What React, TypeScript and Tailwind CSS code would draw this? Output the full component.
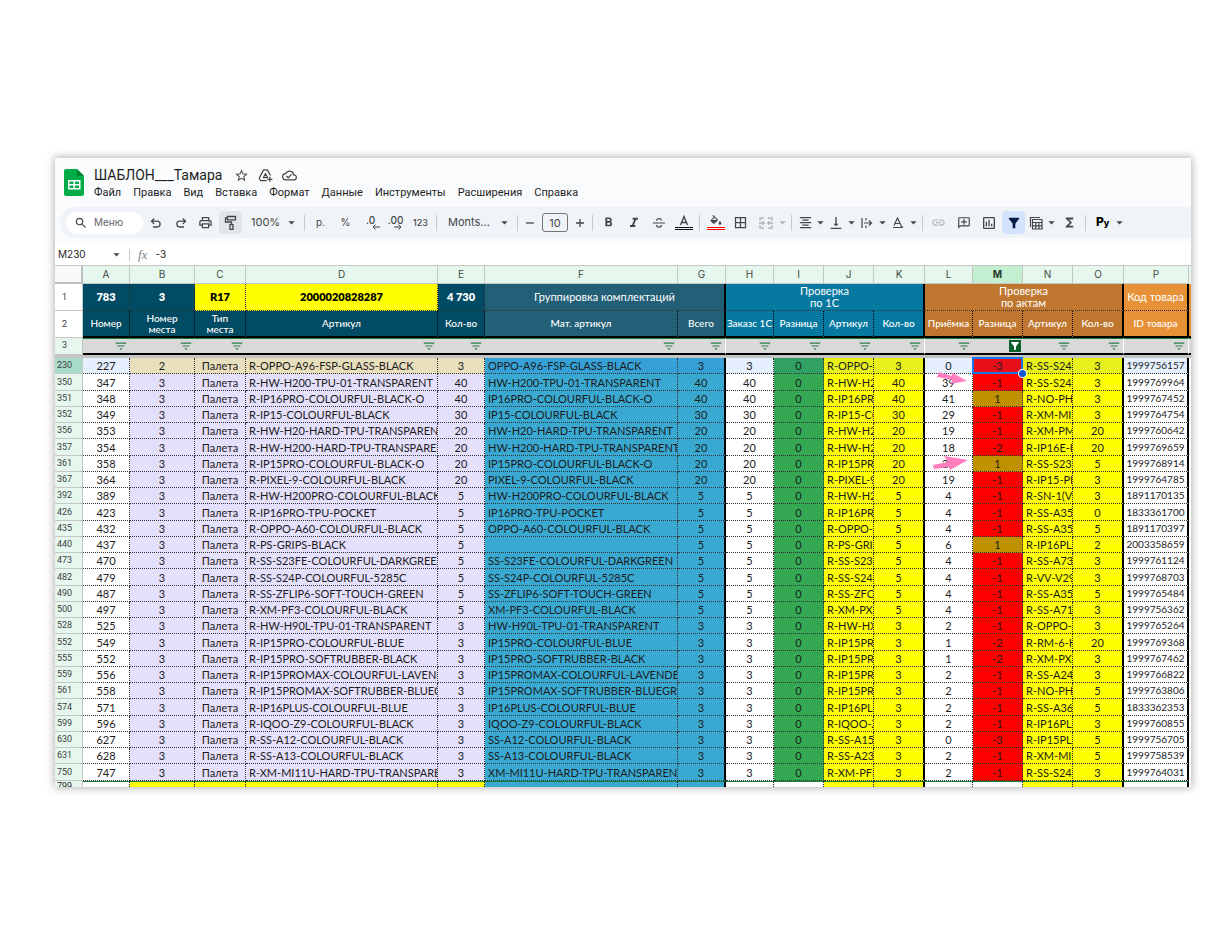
import type { ReactNode } from 'react';
import { clsx } from 'clsx';
import {
  MdArrowDropDown,
  MdBorderAll,
  MdFilterAlt,
  MdFilterList,
  MdFormatAlignCenter,
  MdFormatBold,
  MdFormatItalic,
  MdFunctions,
  MdLink,
  MdOutlineAddComment,
  MdOutlineCloudDone,
  MdOutlineInsertChart,
  MdOutlinePrint,
  MdSearch,
  MdStarBorder,
  MdVerticalAlignBottom,
} from 'react-icons/md';

const MENUS = ['Файл', 'Правка', 'Вид', 'Вставка', 'Формат', 'Данные', 'Инструменты', 'Расширения', 'Справка'];

const COLUMNS = [
  { id: 'A', width: 'w-[47px]' },
  { id: 'B', width: 'w-[65px]' },
  { id: 'C', width: 'w-[51px]' },
  { id: 'D', width: 'w-[192px]' },
  { id: 'E', width: 'w-[47px]' },
  { id: 'F', width: 'w-[193px]' },
  { id: 'G', width: 'w-[48px]' },
  { id: 'H', width: 'w-[48px]' },
  { id: 'I', width: 'w-[50px]' },
  { id: 'J', width: 'w-[50px]' },
  { id: 'K', width: 'w-[51px]' },
  { id: 'L', width: 'w-[48px]' },
  { id: 'M', width: 'w-[50px]' },
  { id: 'N', width: 'w-[50px]' },
  { id: 'O', width: 'w-[51px]' },
  { id: 'P', width: 'w-[65px]' },
];

// row, A, B, D, qty, F, J, L, M, N, O, P
type Row = [number, number, number, string, number, string, string, number, number, string, number, string];

const ROWS: Row[] = [
  [230, 227, 2, 'R-OPPO-A96-FSP-GLASS-BLACK', 3, 'OPPO-A96-FSP-GLASS-BLACK', 'R-OPPO-', 0, -3, 'R-SS-S24', 3, '1999756157'],
  [350, 347, 3, 'R-HW-H200-TPU-01-TRANSPARENT', 40, 'HW-H200-TPU-01-TRANSPARENT', 'R-HW-H2', 39, -1, 'R-SS-S24', 3, '1999769964'],
  [351, 348, 3, 'R-IP16PRO-COLOURFUL-BLACK-O', 40, 'IP16PRO-COLOURFUL-BLACK-O', 'R-IP16PR', 41, 1, 'R-NO-PH', 3, '1999767452'],
  [352, 349, 3, 'R-IP15-COLOURFUL-BLACK', 30, 'IP15-COLOURFUL-BLACK', 'R-IP15-CO', 29, -1, 'R-XM-MI9', 3, '1999764754'],
  [356, 353, 3, 'R-HW-H20-HARD-TPU-TRANSPARENT', 20, 'HW-H20-HARD-TPU-TRANSPARENT', 'R-HW-H2', 19, -1, 'R-XM-PM', 20, '1999760642'],
  [357, 354, 3, 'R-HW-H200-HARD-TPU-TRANSPARENT', 20, 'HW-H200-HARD-TPU-TRANSPARENT', 'R-HW-H2', 18, -2, 'R-IP16E-H', 20, '1999769659'],
  [361, 358, 3, 'R-IP15PRO-COLOURFUL-BLACK-O', 20, 'IP15PRO-COLOURFUL-BLACK-O', 'R-IP15PR', 21, 1, 'R-SS-S23', 5, '1999768914'],
  [367, 364, 3, 'R-PIXEL-9-COLOURFUL-BLACK', 20, 'PIXEL-9-COLOURFUL-BLACK', 'R-PIXEL-9', 19, -1, 'R-IP15-PR', 3, '1999764785'],
  [392, 389, 3, 'R-HW-H200PRO-COLOURFUL-BLACK', 5, 'HW-H200PRO-COLOURFUL-BLACK', 'R-HW-H2', 4, -1, 'R-SN-1(VI', 3, '1891170135'],
  [426, 423, 3, 'R-IP16PRO-TPU-POCKET', 5, 'IP16PRO-TPU-POCKET', 'R-IP16PR', 4, -1, 'R-SS-A35', 0, '1833361700'],
  [435, 432, 3, 'R-OPPO-A60-COLOURFUL-BLACK', 5, 'OPPO-A60-COLOURFUL-BLACK', 'R-OPPO-', 4, -1, 'R-SS-A35', 5, '1891170397'],
  [440, 437, 3, 'R-PS-GRIPS-BLACK', 5, '', 'R-PS-GRI', 6, 1, 'R-IP16PLU', 2, '2003358659'],
  [473, 470, 3, 'R-SS-S23FE-COLOURFUL-DARKGREEN', 5, 'SS-S23FE-COLOURFUL-DARKGREEN', 'R-SS-S23', 4, -1, 'R-SS-A73', 3, '1999761124'],
  [482, 479, 3, 'R-SS-S24P-COLOURFUL-5285C', 5, 'SS-S24P-COLOURFUL-5285C', 'R-SS-S24', 4, -1, 'R-VV-V29', 3, '1999768703'],
  [490, 487, 3, 'R-SS-ZFLIP6-SOFT-TOUCH-GREEN', 5, 'SS-ZFLIP6-SOFT-TOUCH-GREEN', 'R-SS-ZFO', 4, -1, 'R-SS-A35', 5, '1999765484'],
  [500, 497, 3, 'R-XM-PF3-COLOURFUL-BLACK', 5, 'XM-PF3-COLOURFUL-BLACK', 'R-XM-PX7', 4, -1, 'R-SS-A71-', 3, '1999756362'],
  [528, 525, 3, 'R-HW-H90L-TPU-01-TRANSPARENT', 3, 'HW-H90L-TPU-01-TRANSPARENT', 'R-HW-HX', 2, -1, 'R-OPPO-', 3, '1999765264'],
  [552, 549, 3, 'R-IP15PRO-COLOURFUL-BLUE', 3, 'IP15PRO-COLOURFUL-BLUE', 'R-IP15PR', 1, -2, 'R-RM-6-H', 20, '1999769368'],
  [555, 552, 3, 'R-IP15PRO-SOFTRUBBER-BLACK', 3, 'IP15PRO-SOFTRUBBER-BLACK', 'R-IP15PR', 1, -2, 'R-XM-PX3', 3, '1999767462'],
  [559, 556, 3, 'R-IP15PROMAX-COLOURFUL-LAVENDER', 3, 'IP15PROMAX-COLOURFUL-LAVENDER', 'R-IP15PR', 2, -1, 'R-SS-A24', 3, '1999766822'],
  [561, 558, 3, 'R-IP15PROMAX-SOFTRUBBER-BLUEGR', 3, 'IP15PROMAX-SOFTRUBBER-BLUEGR', 'R-IP15PR', 2, -1, 'R-NO-PH', 5, '1999763806'],
  [574, 571, 3, 'R-IP16PLUS-COLOURFUL-BLUE', 3, 'IP16PLUS-COLOURFUL-BLUE', 'R-IP16PLU', 2, -1, 'R-SS-A36', 5, '1833362353'],
  [599, 596, 3, 'R-IQOO-Z9-COLOURFUL-BLACK', 3, 'IQOO-Z9-COLOURFUL-BLACK', 'R-IQOO-Z', 2, -1, 'R-IP16PLU', 3, '1999760855'],
  [630, 627, 3, 'R-SS-A12-COLOURFUL-BLACK', 3, 'SS-A12-COLOURFUL-BLACK', 'R-SS-A15-', 0, -3, 'R-IP15PLU', 5, '1999756705'],
  [631, 628, 3, 'R-SS-A13-COLOURFUL-BLACK', 3, 'SS-A13-COLOURFUL-BLACK', 'R-SS-A23', 2, -1, 'R-XM-MI9', 5, '1999758539'],
  [750, 747, 3, 'R-XM-MI11U-HARD-TPU-TRANSPARENT', 3, 'XM-MI11U-HARD-TPU-TRANSPARENT', 'R-XM-PF3', 2, -1, 'R-SS-S24', 3, '1999764031'],
];

const DOTTED = 'border-b border-r border-dotted border-[#333333]';
const THICK = 'border-r-2 border-b border-b-[#333333] border-r-black [border-style:solid_solid_dotted_solid]';
const TEAL = 'bg-[#024b64]';
const SLATE = 'bg-[#235f76]';
const BLUE = 'bg-[#0679a1]';
const BROWN = 'bg-[#bf772f]';
const ORANGE = 'bg-[#e69138]';

function isGroupEnd(id: string) {
  return id === 'G' || id === 'K' || id === 'O' || id === 'P';
}

function Separator() {
  return <span className="mx-[3px] h-4 w-px shrink-0 bg-[#c7cacd]" />;
}

interface ToolProps {
  label: string;
  children: ReactNode;
  active?: 'gray' | 'blue';
  muted?: boolean;
}

function Tool({ label, children, active, muted }: ToolProps) {
  return (
    <button aria-label={label} className={clsx('flex h-6 w-[25px] shrink-0 items-center justify-center', muted && 'text-[#b0b3b6]')}>
      <span
        className={clsx(
          'flex h-[23px] w-[23px] items-center justify-center rounded-sm',
          active === 'gray' && 'bg-[#e1e5ea]',
          active === 'blue' && 'bg-[#d3e3fd] text-[#041e49]',
        )}
      >
        {children}
      </span>
    </button>
  );
}

function MenuTool({ label, children }: ToolProps) {
  return (
    <button aria-label={label} className="flex h-6 w-[31px] shrink-0 items-center">
      <span className="flex w-5 justify-center">{children}</span>
      <MdArrowDropDown className="-mx-0.5 h-[15px] w-[15px] shrink-0" />
    </button>
  );
}

function Picker({ label, value, className }: { label: string; value: string; className: string }) {
  return (
    <label className={clsx('relative flex h-6 shrink-0 items-center', className)}>
      <select aria-label={label} className="w-full appearance-none bg-transparent pl-2 outline-none">
        <option>{value}</option>
      </select>
      <MdArrowDropDown className="pointer-events-none absolute right-0.5 h-[15px] w-[15px]" />
    </label>
  );
}

function SheetsLogo() {
  return (
    <svg viewBox="0 0 20 27" className="mt-0.5 h-[27px] w-5 shrink-0">
      <path d="M2 0h11l7 7v18a2 2 0 0 1-2 2H2a2 2 0 0 1-2-2V2a2 2 0 0 1 2-2z" fill="#00ac47" />
      <path d="M13 0l7 7h-7z" fill="#00832d" />
      <path d="M4 11h12.500v9.500H4zM5.500 12.500v2.400h3.900v-2.400zM11 12.500v2.400h4v-2.400zM5.500 16.500v2.500h3.900v-2.500zM11 16.500v2.500h4v-2.500z" fill="#fff" fillRule="evenodd" />
    </svg>
  );
}

function DriveAddIcon() {
  return (
    <svg viewBox="0 0 24 24" className="h-[15px] w-[15px]" fill="none" stroke="currentColor" strokeWidth="2" strokeLinejoin="round">
      <path d="M14 20H4l-2-4L9 3h6l5 9" />
      <path d="M8.500 15.500L12 9l3.500 6.500z" />
      <path d="M19 14v8M15 18h8" />
    </svg>
  );
}

function TitleBar() {
  return (
    <header className="flex items-start gap-[10px] bg-[#f9fbfd] pt-[9px] pb-1 pl-[9px] font-['Roboto',sans-serif] text-[#1f1f1f]">
      <SheetsLogo />
      <div>
        <div className="flex h-4 items-center">
          <h1 className="text-[14px] leading-4 text-[#1f1f1f]">ШАБЛОН___Тамара</h1>
          <div className="ml-3 flex items-center gap-[9px] text-[#444746]">
            <button aria-label="Пометить"><MdStarBorder size={15} /></button>
            <button aria-label="Переместить"><DriveAddIcon /></button>
            <button aria-label="Статус документа"><MdOutlineCloudDone size={15} /></button>
          </div>
        </div>
        <nav className="flex h-5 items-center gap-3 text-[11px]">
          {MENUS.map((menu) => (
            <button key={menu}>{menu}</button>
          ))}
        </nav>
      </div>
    </header>
  );
}

function Toolbar() {
  return (
    <div className="bg-[#f9fbfd] pb-[6px] pl-[5px]">
      <div className="flex h-[31px] items-center rounded-l-full bg-[#f0f4f9] pl-[6px] text-[11px] text-[#444746]">
        <label className="flex h-[22px] w-[77px] shrink-0 items-center gap-1.5 rounded-full bg-white pl-2">
          <MdSearch size={14} className="shrink-0" />
          <input aria-label="Меню" placeholder="Меню" className="w-10 bg-transparent text-[10px] outline-none placeholder:text-[#5f6368]" />
        </label>
        <Tool label="Отменить">
          <svg viewBox="0 0 12 12" className="h-3 w-3" fill="none" stroke="currentColor" strokeWidth="1.300"><path d="M4.200 1.500L1.500 4.200l2.700 2.700M1.500 4.200h5.700a2.900 2.900 0 0 1 0 5.800H3" /></svg>
        </Tool>
        <Tool label="Повторить">
          <svg viewBox="0 0 12 12" className="h-3 w-3" fill="none" stroke="currentColor" strokeWidth="1.300"><path d="M7.800 1.500l2.700 2.700-2.700 2.700M10.500 4.200H4.800a2.900 2.900 0 0 0 0 5.800H9" /></svg>
        </Tool>
        <Tool label="Печать">
          <MdOutlinePrint size={15} />
        </Tool>
        <Tool label="Копировать форматирование" active="gray">
          <svg viewBox="0 0 14 16" className="h-4 w-3.5" fill="none" stroke="currentColor" strokeWidth="1.300"><path d="M3.500 1.500h8v3.400h-8zM3.500 3H1.500v4h6v2.500M6 9.700h3v4.600H6z" /></svg>
        </Tool>
        <Picker label="Масштаб" value="100%" className="w-[58px]" />
        <Separator />
        <Tool label="Денежный формат"><span className="text-[10px]">р.</span></Tool>
        <Tool label="Процентный формат"><span className="text-[10px]">%</span></Tool>
        <Tool label="Уменьшить число знаков">
          <span className="relative -top-0.5 text-[10px] font-medium">
            .0
            <svg viewBox="0 0 8 6" className="absolute top-[11px] left-1.5 h-1.5 w-2" fill="none" stroke="currentColor"><path d="M8 3H1M3.500 .5L1 3l2.500 2.500" /></svg>
          </span>
        </Tool>
        <Tool label="Увеличить число знаков">
          <span className="relative -top-0.5 text-[10px] font-medium">
            .00
            <svg viewBox="0 0 8 6" className="absolute top-[11px] left-1.5 h-1.5 w-2" fill="none" stroke="currentColor"><path d="M0 3h7M4.500 .5L7 3 4.500 5.500" /></svg>
          </span>
        </Tool>
        <Tool label="Другие форматы"><span className="text-[9px] font-medium">123</span></Tool>
        <Separator />
        <Picker label="Шрифт" value="Monts..." className="w-[74px]" />
        <Separator />
        <button aria-label="Уменьшить размер шрифта" className="flex w-[18px] shrink-0 justify-center">
          <svg viewBox="0 0 10 10" className="h-2.5 w-2.5" stroke="currentColor" strokeWidth="1.300"><path d="M1 5h8" /></svg>
        </button>
        <input aria-label="Размер шрифта" defaultValue="10" className="mx-[3px] h-[19px] w-[26px] shrink-0 rounded-[3px] border border-[#747775] bg-transparent text-center outline-none" />
        <button aria-label="Увеличить размер шрифта" className="flex w-[18px] shrink-0 justify-center">
          <svg viewBox="0 0 10 10" className="h-2.5 w-2.5" stroke="currentColor" strokeWidth="1.300"><path d="M1 5h8M5 1v8" /></svg>
        </button>
        <Separator />
        <Tool label="Полужирный">
          <MdFormatBold size={15} />
        </Tool>
        <Tool label="Курсив">
          <MdFormatItalic size={16} />
        </Tool>
        <Tool label="Зачеркнутый">
          <svg viewBox="0 0 12 12" className="h-3 w-3" fill="none" stroke="currentColor" strokeWidth="1.200"><path d="M0 6h12M8.500 3.500C8.200 2.300 7.200 1.700 6 1.700S3.500 2.300 3.500 3.700M3.500 8c.2 1.500 1.200 2.200 2.500 2.200S8.500 9.500 8.500 8" /></svg>
        </Tool>
        <Tool label="Цвет текста">
          <svg viewBox="0 0 18 16" className="h-4 w-[18px]" fill="none" stroke="currentColor" strokeWidth="1.400"><path d="M5.500 10L9 1.500 12.500 10M6.500 7.500h5" /><path d="M0 12.500h18M0 14.500h18" stroke="#111" strokeWidth="1" /></svg>
        </Tool>
        <Separator />
        <Tool label="Цвет заливки">
          <svg viewBox="0 0 18 16" className="h-4 w-[18px]">
            <path d="M6.300 0l4.900 4.900L7.500 8.600a1 1 0 0 1-1.400 0L3.800 6.300a1 1 0 0 1 0-1.400l3-3L5.400.8zM7.500 2.700L5.100 5.100h4.800zM13 6s1.400 1.500 1.400 2.400a1.400 1.400 0 0 1-2.800 0C11.600 7.500 13 6 13 6z" fill="currentColor" fillRule="evenodd" />
            <rect x="0" y="12" width="18" height="1" fill="#ff0000" />
            <rect x="0" y="14" width="18" height="1" fill="#ff0000" />
          </svg>
        </Tool>
        <Tool label="Границы">
          <MdBorderAll size={15} />
        </Tool>
        <button aria-label="Объединить ячейки" className="flex h-6 w-[35px] shrink-0 items-center justify-end text-[#b0b3b6]">
          <svg viewBox="0 0 14 12" className="mr-0.5 h-3 w-3.5 shrink-0" fill="none" stroke="currentColor" strokeWidth="1.300"><path d="M5 1H1v3M9 1h4v3M5 11H1V8M9 11h4V8M0 6h5M3.500 4.200L5.300 6 3.500 7.800M14 6H9M10.500 4.200L8.700 6l1.800 1.800" /></svg>
          <MdArrowDropDown className="-mr-0.5 h-[15px] w-[15px]" />
        </button>
        <Separator />
        <MenuTool label="Выравнивание по горизонтали"><MdFormatAlignCenter size={15} /></MenuTool>
        <MenuTool label="Выравнивание по вертикали"><MdVerticalAlignBottom size={16} /></MenuTool>
        <MenuTool label="Перенос текста">
          <svg viewBox="0 0 12 12" className="h-3 w-3" fill="none" stroke="currentColor" strokeWidth="1.200"><path d="M1 1v10M5 1v2.500M5 8.500V11M3 6h7.500M8 3.500L10.500 6 8 8.500" /></svg>
        </MenuTool>
        <MenuTool label="Поворот текста">
          <svg viewBox="0 0 12 12" className="h-3 w-3" fill="none" stroke="currentColor" strokeWidth="1.200"><path d="M2 8.500L5.500 1 9 8.500M3.200 6.500h4.600M1 10.500h9.500M8.800 8.700l2 1.800" /></svg>
        </MenuTool>
        <Separator />
        <Tool label="Вставить ссылку" muted>
          <MdLink size={15} />
        </Tool>
        <Tool label="Вставить комментарий">
          <MdOutlineAddComment size={14} className="-scale-x-100" />
        </Tool>
        <Tool label="Вставить диаграмму">
          <MdOutlineInsertChart size={16} />
        </Tool>
        <Tool label="Создать фильтр" active="blue">
          <MdFilterAlt size={16} />
        </Tool>
        <MenuTool label="Режимы таблицы">
          <svg viewBox="0 0 14 14" className="h-3.5 w-3.5 shrink-0" fill="none" stroke="currentColor" strokeWidth="1.200"><path d="M1.500 11V1.500H11M3.500 3.500h9.500V13H3.500zM3.500 6.500H13M3.500 9.800H13M6.700 6.500V13M9.900 6.500V13" /></svg>
        </MenuTool>
        <Tool label="Функции">
          <MdFunctions size={15} />
        </Tool>
        <Separator />
        <button aria-label="Py" className="flex h-6 w-[38px] shrink-0 items-center justify-between pl-[7px] text-black">
          <span className="text-[12px] leading-3 font-extrabold">P<span className="text-[9px]">y</span></span>
          <MdArrowDropDown className="h-[15px] w-[15px] text-[#444746]" />
        </button>
      </div>
    </div>
  );
}

function FormulaBar() {
  return (
    <div className="flex h-[22px] items-center border-b border-[#c7c7c7] bg-white text-[10px] text-[#1f1f1f]">
      <input aria-label="Поле имени" defaultValue="M230" className="w-[54px] pl-[3px] outline-none" />
      <button aria-label="Диапазоны" className="text-[#444746]">
        <MdArrowDropDown size={15} />
      </button>
      <span className="ml-[5px] h-3 w-px bg-[#c7c7c7]" />
      <span className="ml-2 font-['Liberation_Serif',serif] text-[13px] text-[#80868b] italic">fx</span>
      <input aria-label="Формула" defaultValue="-3" className="ml-2 flex-1 outline-none" />
    </div>
  );
}

function RowHead({ row, tone }: { row: number; tone: string }) {
  return (
    <th scope="row" className={clsx("border-r border-b border-[#c4c7c5] pr-2 text-center font-['Roboto',sans-serif] text-[9px] font-normal text-[#3c4043]", tone)}>
      {row}
    </th>
  );
}

function HeadCell({ tone, thick, children }: { tone: string; thick?: boolean; children: ReactNode }) {
  return (
    <td
      className={clsx(
        'border-b-2 border-black',
        thick ? 'border-r-2' : 'border-r [border-style:solid_dotted_solid_solid]',
        tone,
      )}
    >
      {children}
    </td>
  );
}

function HeadRows() {
  return (
    <thead>
      <tr className="h-[18px] font-['Inter',sans-serif] text-[10px] leading-[15px] text-[#444746]">
        <th className="border-r-2 border-b-2 border-[#bdbfc1] bg-[#f8f9fa]" />
        {COLUMNS.map(({ id }) => (
          <th key={id} scope="col" className={clsx('border-r border-b border-[#c4c7c5]', id === 'M' ? 'bg-[#c4eed0] font-bold text-[#1f3b2b]' : 'bg-[#e6f8ed] font-normal')}>
            {id}
          </th>
        ))}
        <th className="bg-[#e6f8ed]" />
      </tr>
      <tr className="h-[27px] text-[11px] leading-3 text-white">
        <RowHead row={1} tone="bg-white" />
        <td className={clsx(DOTTED, TEAL, 'font-extrabold')}>783</td>
        <td className={clsx(DOTTED, TEAL, 'font-extrabold')}>3</td>
        <td className={clsx(DOTTED, 'bg-[#ffff00] font-extrabold text-black')}>R17</td>
        <td className={clsx(DOTTED, 'bg-[#ffff00] font-extrabold text-black')}>2000020828287</td>
        <td className={clsx(DOTTED, TEAL, 'font-extrabold')}>4 730</td>
        <td colSpan={2} className={clsx(THICK, SLATE)}>Группировка комплектаций</td>
        <td colSpan={4} className={clsx(THICK, BLUE)}>Проверка<br />по 1С</td>
        <td colSpan={4} className={clsx(THICK, BROWN)}>Проверка<br />по актам</td>
        <td className={clsx(THICK, ORANGE, 'whitespace-nowrap')}>Код товара</td>
        <td className={ORANGE} />
      </tr>
      <tr className="h-[27px] text-[10px] leading-[11px] font-medium whitespace-nowrap text-white">
        <RowHead row={2} tone="bg-white" />
        <HeadCell tone={TEAL}>Номер</HeadCell>
        <HeadCell tone={TEAL}>Номер<br />места</HeadCell>
        <HeadCell tone={TEAL}>Тип<br />места</HeadCell>
        <HeadCell tone={TEAL}>Артикул</HeadCell>
        <HeadCell tone={TEAL}>Кол-во</HeadCell>
        <HeadCell tone={SLATE}>Мат. артикул</HeadCell>
        <HeadCell tone={SLATE} thick>Всего</HeadCell>
        <HeadCell tone={BLUE}>Заказс 1С</HeadCell>
        <HeadCell tone={BLUE}>Разница</HeadCell>
        <HeadCell tone={BLUE}>Артикул</HeadCell>
        <HeadCell tone={BLUE} thick>Кол-во</HeadCell>
        <HeadCell tone={BROWN}>Приёмка</HeadCell>
        <HeadCell tone={BROWN}>Разница</HeadCell>
        <HeadCell tone={BROWN}>Артикул</HeadCell>
        <HeadCell tone={BROWN} thick>Кол-во</HeadCell>
        <HeadCell tone={ORANGE} thick>ID товара</HeadCell>
        <td className={clsx(ORANGE, 'border-b-2 border-black')} />
      </tr>
      <tr className="h-[17px]">
        <RowHead row={3} tone="bg-[#e6f8ed]" />
        {COLUMNS.map(({ id }) => (
          <td key={id} className={clsx('border-t border-b-2 border-t-[#188038] border-b-black bg-[#d9d9d9]', isGroupEnd(id) && 'border-r border-r-white')}>
            <button aria-label={`Фильтр ${id}`} className={clsx('mr-[2px] ml-auto flex h-3 items-center justify-center', id === 'M' ? 'w-3 bg-[#0d5f2b] text-white' : 'w-3.5 text-[#2f7a4e]')}>
              {id === 'M' ? <MdFilterAlt size={12} /> : <MdFilterList size={14} />}
            </button>
          </td>
        ))}
        <td className="border-t border-b-2 border-t-[#188038] border-b-black bg-[#d9d9d9]" />
      </tr>
      <tr className="h-[3px]">
        <td colSpan={18} className="bg-[#c4c4c4]" />
      </tr>
    </thead>
  );
}

function cellTone(id: string, diff: number, selected: boolean) {
  if (id === 'M') {
    if (diff > 0) return 'bg-[#bf9000]';
    return selected ? 'bg-[#e90f19]' : 'bg-[#ff0000]';
  }
  if ('BCDE'.includes(id)) return selected ? 'bg-[#e8dfbd]' : 'bg-[#e4dffb]';
  if ('FG'.includes(id)) return selected ? 'bg-[#36a1d6]' : 'bg-[#3aa9d2]';
  if (id === 'I') return selected ? 'bg-[#31a163]' : 'bg-[#34a853]';
  if ('JKNO'.includes(id)) return selected ? 'bg-[#e8f01a]' : 'bg-[#ffff00]';
  return selected ? 'bg-[#e6effd]' : 'bg-white';
}

function lastRowTone(id: string) {
  if ('BCDEJKNO'.includes(id)) return 'bg-[#ffff00]';
  if ('FG'.includes(id)) return 'bg-[#3aa9d2]';
  return 'bg-white';
}

function Arrow({ up }: { up?: boolean }) {
  return (
    <svg viewBox="0 0 36 16" className={clsx('absolute z-10 h-4 w-9', up ? 'top-0 left-2' : '-top-0.5 left-3')} fill="#ff7ebf">
      {up ? <path d="M0 9L15 6 11 0 35 4 15 15 18 11 1 13z" /> : <path d="M2 0L15 4 14 0 30 9 13 12 16 8 0 5z" />}
    </svg>
  );
}

function DataRow({ data, index }: { data: Row; index: number }) {
  const [row, a, b, d, qty, f, j, l, m, n, o, p] = data;
  const selected = row === 230;
  const values = [a, b, 'Палета', d, qty, f, qty, qty, 0, j, qty, l, m, n, o, p];

  return (
    <tr className={index % 4 === 1 ? 'h-[17px]' : 'h-[16px]'}>
      <RowHead row={row} tone={selected ? 'bg-[#a8dbc8]' : 'bg-[#e6f8ed]'} />
      {COLUMNS.map(({ id }, i) => (
        <td
          key={id}
          className={clsx(
            'whitespace-nowrap',
            isGroupEnd(id) ? THICK : DOTTED,
            cellTone(id, m, selected),
            'DFJN'.includes(id) ? 'overflow-hidden pl-[3px] text-left' : 'text-center',
            'LM'.includes(id) && 'relative',
            id === 'P' && 'text-[10px]',
          )}
        >
          {values[i]}
          {id === 'L' && row === 350 && <Arrow />}
          {id === 'L' && row === 361 && <Arrow up />}
          {id === 'M' && selected && (
            <span className="absolute -inset-px z-10 border-2 border-[#1a73e8]">
              <span className="absolute -right-[5px] -bottom-[5px] h-[7px] w-[7px] rounded-full bg-[#0b57d0] ring-1 ring-white" />
            </span>
          )}
        </td>
      ))}
      <td className="bg-white" />
    </tr>
  );
}

function Sheet() {
  return (
    <table className="w-full table-fixed border-separate border-spacing-0 bg-white text-center font-['Lato','Inter',sans-serif]">
      <colgroup>
        <col className="w-[28px]" />
        {COLUMNS.map(({ id, width }) => (
          <col key={id} className={width} />
        ))}
        <col className="w-[2px]" />
      </colgroup>
      <HeadRows />
      <tbody className="text-[11px] leading-[15px] text-[#1c1c1c]">
        {ROWS.map((data, index) => (
          <DataRow key={data[0]} data={data} index={index} />
        ))}
        <tr>
          <th scope="row" className="border-r border-[#c4c7c5] bg-[#e6f8ed] pr-2 font-['Roboto',sans-serif] text-[9px] leading-[11px] font-normal">
            <div className="h-[6px] overflow-hidden">799</div>
          </th>
          {COLUMNS.map(({ id }) => (
            <td key={id} className={clsx('border-t border-t-[#188038]', isGroupEnd(id) ? 'border-r-2 border-r-black' : 'border-r border-r-[#222222] [border-style:solid_dotted_solid_solid]', lastRowTone(id))} />
          ))}
          <td />
        </tr>
      </tbody>
    </table>
  );
}

export default function App() {
  return (
    <main className="min-h-screen bg-white pt-[158px] pr-7 pb-10 pl-[55px] font-['Inter',sans-serif]">
      <div className="overflow-hidden shadow-[0_0_8px_1px_rgba(0,0,0,0.3)]">
        <TitleBar />
        <Toolbar />
        <FormulaBar />
        <Sheet />
      </div>
    </main>
  );
}
